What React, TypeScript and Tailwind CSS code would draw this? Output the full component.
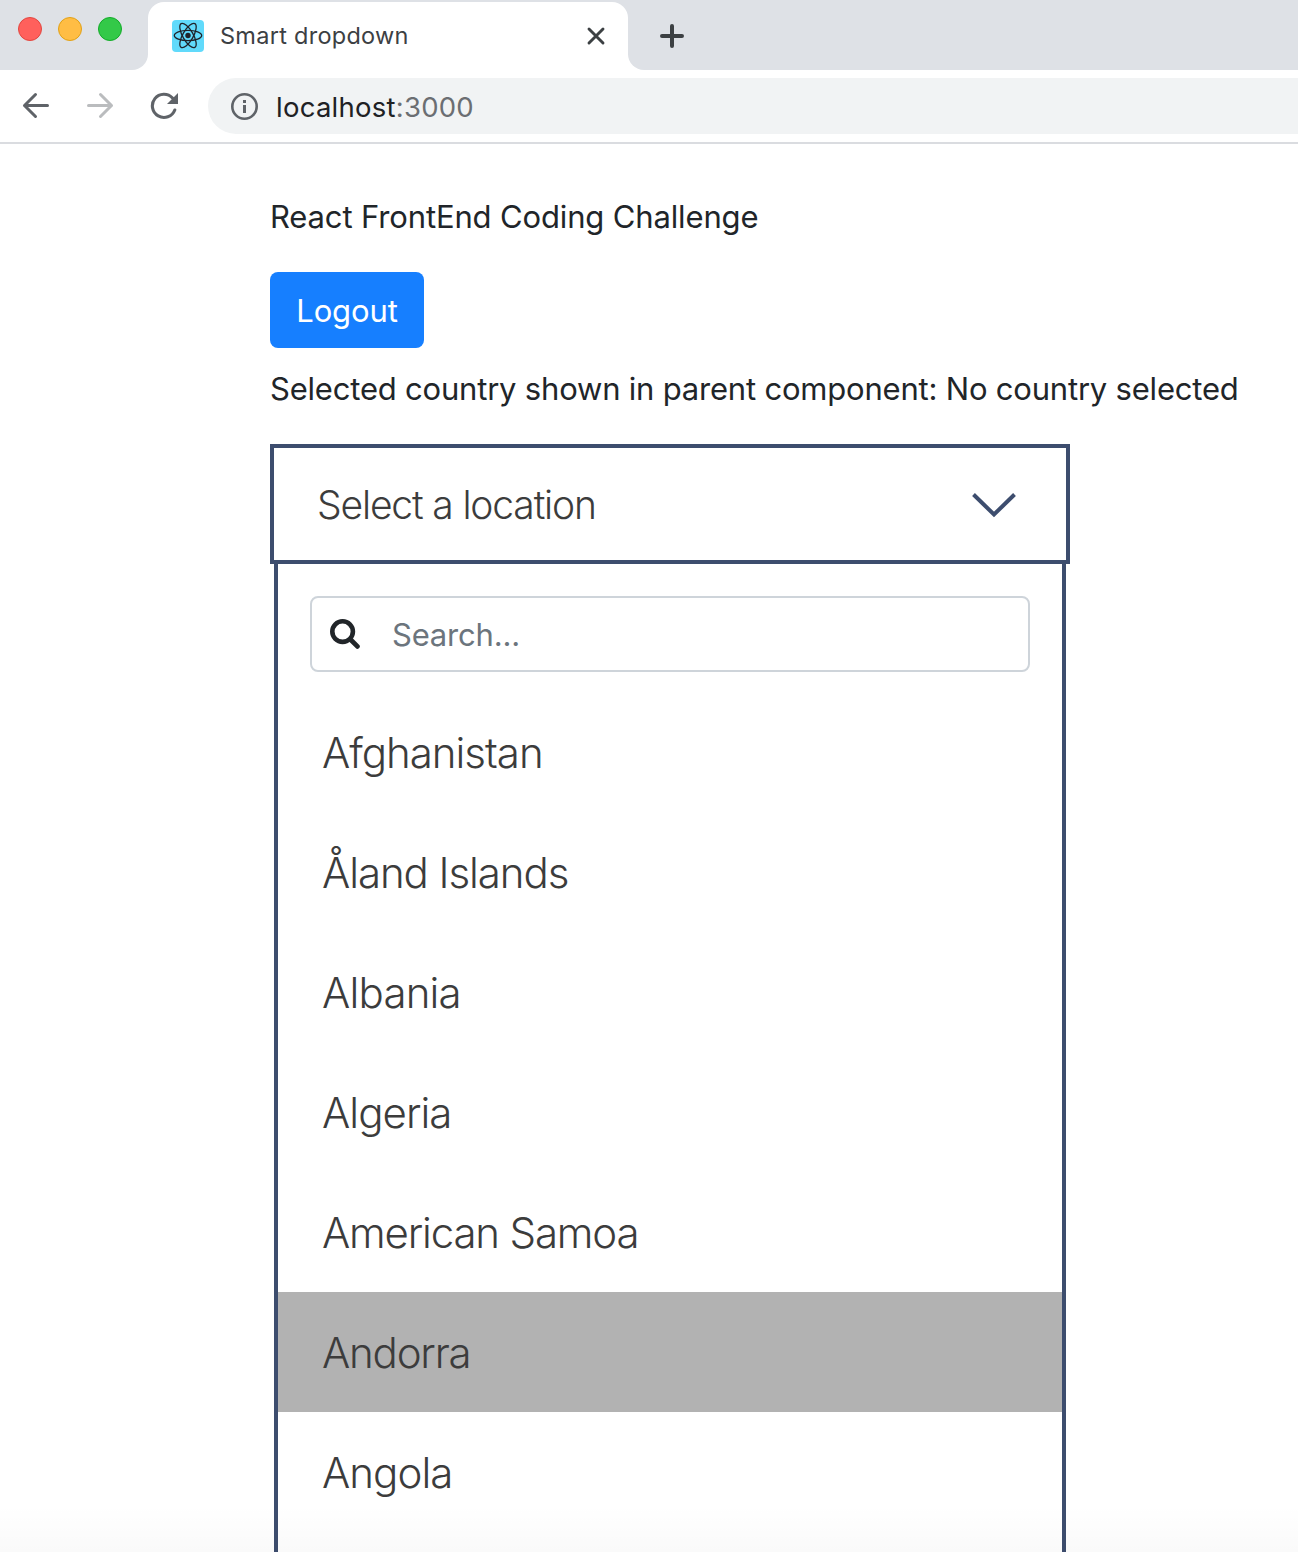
const countries = [
  { name: 'Afghanistan', tracking: 'tracking-[-1px]' },
  { name: 'Åland Islands', tracking: 'tracking-[-1.07px]' },
  { name: 'Albania', tracking: 'tracking-[-0.8px]' },
  { name: 'Algeria', tracking: 'tracking-[-0.95px]' },
  { name: 'American Samoa', tracking: 'tracking-[-1.17px]' },
  { name: 'Andorra', tracking: 'tracking-[-1.2px]' },
  { name: 'Angola', tracking: 'tracking-[-0.95px]' },
];
const highlighted = 'Andorra';

function ReactIcon() {
  return (
    <svg className="h-8 w-8 shrink-0" viewBox="0 0 32 32" fill="none" stroke="#20232a" strokeWidth="1.3">
      <rect width="32" height="32" rx="4" fill="#61dafb" stroke="none" />
      <ellipse cx="16" cy="15.5" rx="13.7" ry="5.2" />
      <ellipse cx="16" cy="15.5" rx="13.7" ry="5.2" transform="rotate(60 16 15.5)" />
      <ellipse cx="16" cy="15.5" rx="13.7" ry="5.2" transform="rotate(120 16 15.5)" />
      <circle cx="16" cy="15.5" r="2.7" fill="#20232a" stroke="none" />
    </svg>
  );
}

function TabStrip() {
  return (
    <div className="flex h-[70px] bg-[#dee1e6]">
      <div className="flex w-[148px] bg-white">
        <div className="flex h-[70px] w-[148px] gap-4 rounded-br-[16px] bg-[#dee1e6] pt-[17px] pl-[18px]">
          <span className="h-6 w-6 rounded-full border border-[#e2463f] bg-[#ff605c]" />
          <span className="h-6 w-6 rounded-full border border-[#e1a116] bg-[#ffbd44]" />
          <span className="h-6 w-6 rounded-full border border-[#12ac28] bg-[#33c948]" />
        </div>
      </div>
      <div className="mt-[2px] flex h-[68px] w-[480px] items-center rounded-t-[16px] bg-white pr-[22px] pl-6">
        <ReactIcon />
        <span className="ml-4 flex-1 whitespace-nowrap text-[23.5px] leading-8 tracking-[0.27px] text-[#3c4043]">Smart dropdown</span>
        <svg className="h-5 w-5" viewBox="0 0 20 20" fill="none" stroke="#3c4043" strokeWidth="2.9" strokeLinecap="round">
          <path d="M3 3l14 14M17 3L3 17" />
        </svg>
      </div>
      <div className="flex flex-1 bg-white">
        <div className="flex flex-1 items-center rounded-bl-[16px] bg-[#dee1e6] pt-[2px] pl-8">
          <svg className="h-6 w-6" viewBox="0 0 24 24" fill="none" stroke="#3c4043" strokeWidth="4" strokeLinecap="round">
            <path d="M2 12h20M12 2v20" />
          </svg>
        </div>
      </div>
    </div>
  );
}

function AddressBar() {
  return (
    <div className="flex h-[74px] items-center border-b-2 border-[#dadce0] bg-white pl-[22px]">
      <svg className="h-7 w-7 shrink-0" viewBox="0 0 28 28" fill="none" stroke="#5f6368" strokeWidth="3" strokeLinecap="round" strokeLinejoin="round">
        <path d="M25.5 13.5H2.5M13.5 2.5L2.5 13.5L13.5 24.5" />
      </svg>
      <svg className="ml-9 h-7 w-7 shrink-0" viewBox="0 0 28 28" fill="none" stroke="#babcbe" strokeWidth="3" strokeLinecap="round" strokeLinejoin="round">
        <path d="M2.5 13.5H25.5M14.5 2.5L25.5 13.5L14.5 24.5" />
      </svg>
      <svg className="ml-9 h-7 w-7 shrink-0" viewBox="0 0 28 28" fill="none">
        <path d="M22.5 6A11.6 11.6 0 1 0 24.8 18" stroke="#5f6368" strokeWidth="3.1" strokeLinecap="round" />
        <path d="M28 1V12H17Z" fill="#5f6368" />
      </svg>
      <div className="ml-[30px] flex h-14 flex-1 items-center rounded-l-full bg-[#f1f3f4] pl-[23px]">
        <svg className="h-[27px] w-[27px] shrink-0" viewBox="0 0 27 27" fill="none">
          <circle cx="13.5" cy="13.5" r="12.2" stroke="#5f6368" strokeWidth="2.6" />
          <path d="M12 12h3v8h-3zM12 7h3v3h-3z" fill="#5f6368" />
        </svg>
        <p className="ml-[18px] whitespace-nowrap pt-[2px] text-[27.5px] leading-9 tracking-[0.25px] text-[#202124]">
          localhost<span className="text-[#6b6e72]">:3000</span>
        </p>
      </div>
    </div>
  );
}

function Dropdown() {
  return (
    <div className="w-[800px]">
      <div className="flex h-[120px] items-center justify-between border-4 border-[#3d4d6e] pt-[2px] pr-[50px] pl-[43px] text-[#3c3c3c]">
        <span className="whitespace-nowrap text-[39px] leading-[48px] font-light tracking-[-1.15px]">Select a location</span>
        <svg className="h-[26px] w-11" viewBox="0 0 44 26" fill="none" stroke="#3d4d6e" strokeWidth="4">
          <path d="M1.5 2.5L22 22.5L42.5 2.5" />
        </svg>
      </div>
      <div className="mx-1 h-[988px] overflow-hidden border-x-4 border-[#3d4d6e]">
        <div className="mx-8 mt-8 flex h-[76px] items-center rounded-[8px] border-2 border-[#ced4da] pl-[18px]">
          <svg className="h-[30px] w-[30px]" viewBox="0 0 30 30" fill="none" stroke="#212529" strokeLinecap="round">
            <circle cx="12.6" cy="12.6" r="10.3" strokeWidth="4.6" />
            <path d="M20.5 20.5L27.4 27.4" strokeWidth="4.8" />
          </svg>
          <input
            className="ml-8 w-[560px] bg-transparent pt-[2px] text-[31px] leading-[48px] tracking-[-0.2px] outline-none placeholder:text-[#6c757d] placeholder:opacity-100"
            placeholder="Search..."
            aria-label="Search"
          />
        </div>
        <ul className="mt-5 text-[#3c3c3c]">
          {countries.map(({ name, tracking }) => (
            <li key={name} className={`flex h-[120px] items-center pl-11 text-[42px] font-light ${name === highlighted ? 'bg-[#b2b2b2]' : ''}`}>
              <span className={`whitespace-nowrap pt-[2px] leading-[66px] ${tracking}`}>{name}</span>
            </li>
          ))}
        </ul>
      </div>
    </div>
  );
}

export default function App() {
  return (
    <div className="relative h-[1552px] w-[1298px] overflow-hidden bg-white font-['Inter',sans-serif]">
      <TabStrip />
      <AddressBar />
      <main className="flex flex-col items-start pl-[270px] text-[31px] leading-[48px] text-[#212529]">
        <p className="mt-[49px] whitespace-nowrap tracking-[-0.14px]">React FrontEnd Coding Challenge</p>
        <button className="mt-[31px] h-[76px] w-[154px] rounded-[8px] bg-[#167fff] pt-[2px] tracking-[-0.1px] text-white">Logout</button>
        <p className="mt-[17px] mb-[31px] whitespace-nowrap tracking-[-0.2px]">Selected country shown in parent component: No country selected</p>
        <Dropdown />
      </main>
      <div className="pointer-events-none absolute inset-x-0 bottom-0 h-12 bg-gradient-to-b from-transparent to-black/[0.02]" />
    </div>
  );
}
